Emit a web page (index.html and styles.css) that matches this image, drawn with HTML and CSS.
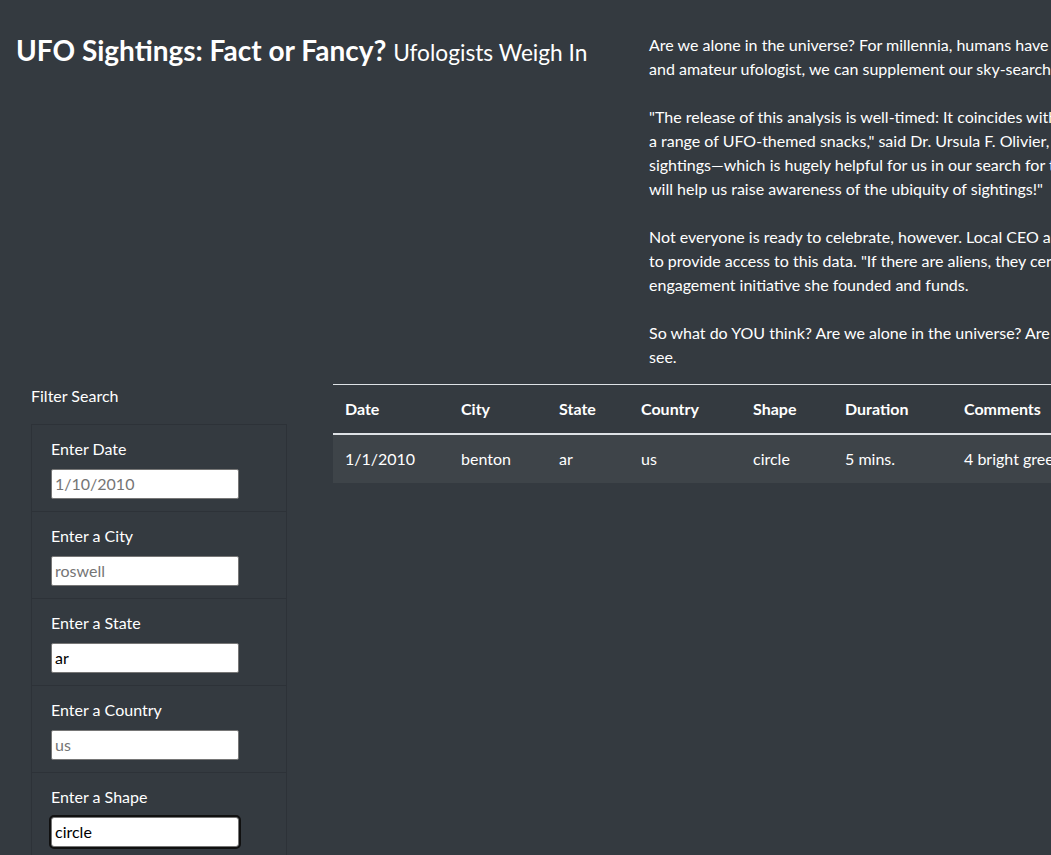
FILE: index.html
```html
<!DOCTYPE html>
<html lang="en">
<head>
<meta charset="utf-8">
<title>UFO Sightings</title>
<link rel="stylesheet" href="styles.css">
</head>
<body>
<div class="page">
  <header class="intro">
    <div class="title-col">
      <h1 class="title">UFO Sightings: Fact or Fancy? <small>Ufologists Weigh In</small></h1>
    </div>
    <div class="story">
      <p>Are we alone in the universe? For millennia, humans have looked to the skies and wondered if there is anyone else out there. Now, thanks to one data scientist<br>and amateur ufologist, we can supplement our sky-searching with data-searching, and explore thousands of reported sightings from around the world.</p>
      <p>"The release of this analysis is well-timed: It coincides with the annual McMinnville UFO Festival, which brings thousands of visitors to town and features<br>a range of UFO-themed snacks," said Dr. Ursula F. Olivier, a renowned ufologist. "This webpage provides an interactive table of reported UFO<br>sightings&mdash;which is hugely helpful for us in our search for the truth. Anyone who is curious can now filter the data by date, city, state, country and shape. It<br>will help us raise awareness of the ubiquity of sightings!"</p>
      <p>Not everyone is ready to celebrate, however. Local CEO and well-known UFO skeptic Ally Zien thinks it is irresponsible for the city government<br>to provide access to this data. "If there are aliens, they certainly don't want to be found," said Zien, who spoke to us on behalf of a community<br>engagement initiative she founded and funds.</p>
      <p>So what do YOU think? Are we alone in the universe? Are we being visited by beings from another planet? Take a look at the data and decide for yourself what you<br>see.</p>
    </div>
  </header>

  <main class="content">
    <aside class="filters">
      <div class="filters-title">Filter Search</div>
      <ul class="filter-list">
        <li class="filter-item">
          <label for="datetime">Enter Date</label>
          <input type="text" id="datetime" placeholder="1/10/2010">
        </li>
        <li class="filter-item">
          <label for="city">Enter a City</label>
          <input type="text" id="city" placeholder="roswell">
        </li>
        <li class="filter-item">
          <label for="state">Enter a State</label>
          <input type="text" id="state" placeholder="ca" value="ar">
        </li>
        <li class="filter-item">
          <label for="country">Enter a Country</label>
          <input type="text" id="country" placeholder="us">
        </li>
        <li class="filter-item">
          <label for="shape">Enter a Shape</label>
          <input type="text" id="shape" class="is-focused" placeholder="light" value="circle">
        </li>
      </ul>
    </aside>

    <section class="results">
      <table class="ufo-table">
        <thead>
          <tr>
            <th class="c-date">Date</th>
            <th class="c-city">City</th>
            <th class="c-state">State</th>
            <th class="c-country">Country</th>
            <th class="c-shape">Shape</th>
            <th class="c-duration">Duration</th>
            <th class="c-comments">Comments</th>
          </tr>
        </thead>
        <tbody>
          <tr>
            <td>1/1/2010</td>
            <td>benton</td>
            <td>ar</td>
            <td>us</td>
            <td>circle</td>
            <td>5 mins.</td>
            <td>4 bright green circles high in the sky going in circles then one bright green light at my front door.</td>
          </tr>
        </tbody>
      </table>
    </section>
  </main>
</div>
</body>
</html>
```

FILE: styles.css
```css
html, body {
  margin: 0;
  padding: 0;
  overflow: hidden;
  background: #343a40;
}

body {
  color: #ffffff;
  font-family: "Lato", "Noto Sans", sans-serif;
  font-size: 16px;
  line-height: 24px;
}

.page {
  width: 1750px;
}

.intro {
  display: flex;
  padding-top: 33px;
}

.title-col {
  width: 649px;
  padding-left: 16px;
  box-sizing: border-box;
  flex: none;
}

.title {
  margin: 0;
  font-size: 28px;
  font-weight: 700;
  line-height: 34px;
}

.title small {
  font-size: 22.7px;
  font-weight: 400;
}

.story {
  width: 1060px;
  white-space: nowrap;
}

.story p {
  margin: 0 0 24px;
}

.story p:last-child {
  margin-bottom: 0;
}

.content {
  display: flex;
  margin-top: 15px;
}

.filters {
  width: 256px;
  margin-left: 31px;
  flex: none;
}

.filters-title {
  line-height: 24px;
  margin-top: 0;
  margin-bottom: 16px;
}

.filter-list {
  list-style: none;
  margin: 0;
  padding: 0;
  border: 1px solid rgba(0, 0, 0, 0.125);
  border-bottom: none;
}

.filter-item {
  padding: 12px 20px 12px 19px;
  border-bottom: 1px solid rgba(0, 0, 0, 0.125);
  display: flex;
  flex-direction: column;
  align-items: flex-start;
  gap: 8px;
}

.filter-item label {
  line-height: 24px;
}

.filter-item input {
  width: 188px;
  height: 30px;
  box-sizing: border-box;
  margin: 0;
  padding: 0 3px 1px;
  border: 1px solid #767676;
  border-radius: 2px;
  background: #ffffff;
  color: #000000;
  font-family: "Lato", "Noto Sans", sans-serif;
  font-size: 16px;
}

.filter-item input::placeholder {
  color: #757575;
}

.filter-item input.is-focused {
  outline: 2px solid #101010;
  outline-offset: 0;
  border-radius: 3px;
}

.results {
  margin-left: 46px;
  flex: none;
}

.ufo-table {
  border-collapse: collapse;
  color: #ffffff;
}

.ufo-table th,
.ufo-table td {
  padding: 12px;
  text-align: left;
  vertical-align: top;
  line-height: 24px;
  white-space: nowrap;
}

.ufo-table th {
  font-weight: 700;
  border-top: 1px solid #dee2e6;
  border-bottom: 2px solid #dee2e6;
}

.ufo-table tbody tr {
  background: rgba(255, 255, 255, 0.05);
}

.c-date { width: 92px; }
.c-city { width: 74px; }
.c-state { width: 58px; }
.c-country { width: 88px; }
.c-shape { width: 68px; }
.c-duration { width: 95px; }
```
